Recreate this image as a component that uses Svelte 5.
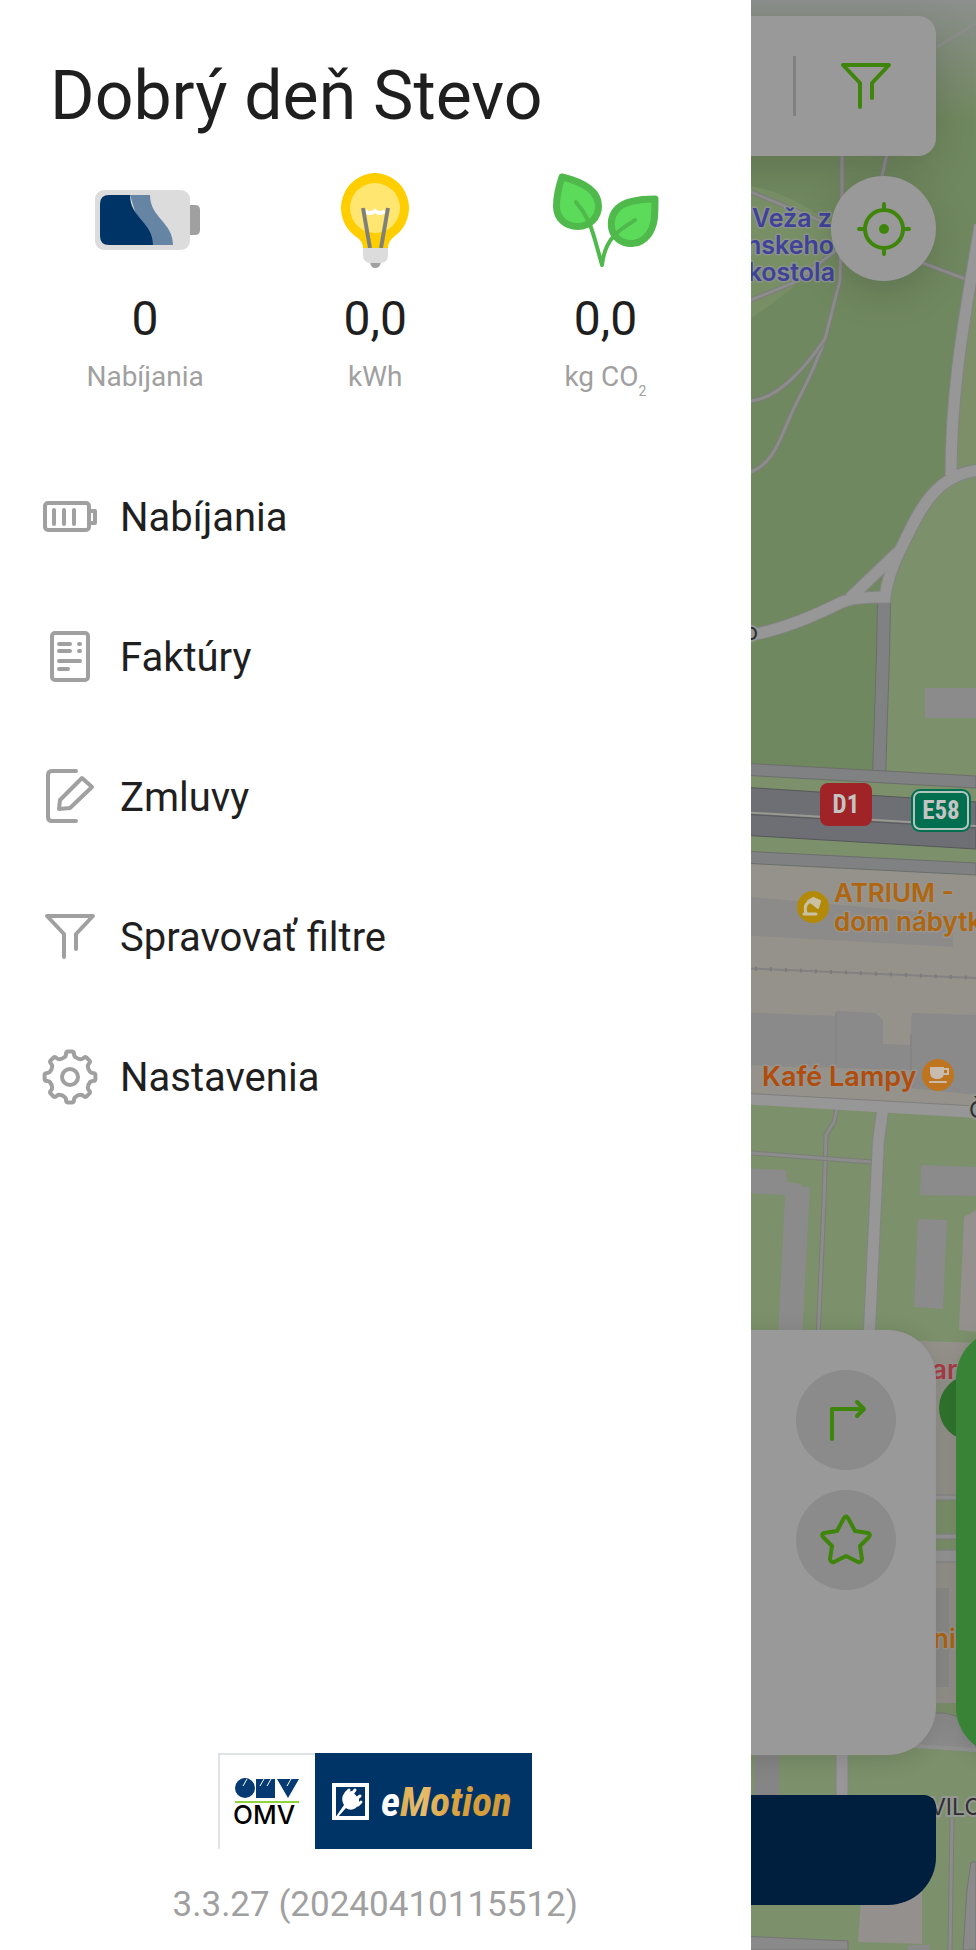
<script>
  const stats = [
    { icon: 'battery', value: '0', label: 'Nabíjania' },
    { icon: 'bulb', value: '0,0', label: 'kWh' },
    { icon: 'leaf', value: '0,0', label: 'kg CO', sub: '2' }
  ];

  const menu = [
    { icon: 'battery', label: 'Nabíjania' },
    { icon: 'invoice', label: 'Faktúry' },
    { icon: 'edit', label: 'Zmluvy' },
    { icon: 'filter', label: 'Spravovať filtre' },
    { icon: 'gear', label: 'Nastavenia' }
  ];

  // Outline of an eight-tooth cog, centred in a 56 unit box.
  function cog() {
    const p = (r, deg) => {
      const a = (deg * Math.PI) / 180;
      return `${(28 + r * Math.cos(a)).toFixed(1)} ${(28 + r * Math.sin(a)).toFixed(1)}`;
    };
    let d = '';
    for (let i = 0; i < 8; i++) {
      const a = i * 45;
      d += `${i ? 'L' : 'M'}${p(23, a - 10)}Q${p(25.5, a - 9)} ${p(25.5, a - 5)}L${p(25.5, a + 5)}Q${p(25.5, a + 9)} ${p(23, a + 10)}`;
      d += `Q${p(20.5, a + 12)} ${p(20.5, a + 17)}Q${p(19.6, a + 22.5)} ${p(20.5, a + 28)}Q${p(20.5, a + 33)} ${p(23, a + 35)}`;
    }
    return d + 'Z';
  }
  const cogPath = cog();

  const paths = [
    'M842 150V200L840 280L826 335C818 362 806 384 796 404C780 436 776 462 751 472',
    'M824 340C808 364 780 398 751 401',
    'M888 150L880 184',
    'M751 192L840 229',
    'M751 300L793 283L850 240',
    'M915 260L976 283',
    'M837 1108L834 1122L826 1135L824 1200L818 1340',
    'M751 1153L872 1162',
    'M952 1818L950 1950'
  ];
  const roads = [
    'M980 225C968 300 951 380 951 475',
    'M980 470C930 475 916 520 900 550C892 568 887 580 885 597C865 597 850 598 840 603C810 618 780 630 751 635',
    'M898 552L850 598',
    'M883 1108C880 1130 878 1140 878 1150L869 1340',
    'M842 1740V1800'
  ];
</script>

<div class="screen">
  <svg class="map" viewBox="0 0 976 1950" preserveAspectRatio="xMaxYMin slice" aria-hidden="true">
    <defs>
      <linearGradient id="haze" x1="0" y1="0" x2="0" y2="1">
        <stop offset="0" stop-color="#8c8f8c" />
        <stop offset="1" stop-color="#8c8f8c" stop-opacity="0" />
      </linearGradient>
    </defs>
    <rect width="976" height="1950" fill="#7c906b" />
    <path d="M740 0H976V470L950 478L905 545L886 600L880 771L740 763Z" fill="#70885f" />
    <path d="M976 260L955 380L951 475L976 470Z" fill="#7c8f69" />
    <path d="M740 184C780 190 815 206 838 236C820 270 785 295 740 326Z" fill="#788f66" />
    <path d="M925 688H976V718H925Z" fill="#8b8b8b" />
    <path d="M884 598L883 655L879 776" fill="none" stroke="#6c6e6c" stroke-width="14" />
    <path d="M884 598L883 655L879 776" fill="none" stroke="#808182" stroke-width="12" />

    <path d="M740 763L976 776V788L740 775Z" fill="#808182" stroke="#6c6e6c" />
    <path d="M740 787L976 802V849L740 835Z" fill="#6d6f74" stroke="#55575a" />
    <path d="M740 812L976 826" stroke="#999992" stroke-width="2" />
    <path d="M740 814L976 828" stroke="#57595c" />
    <path d="M740 863L976 875V1106L740 1094Z" fill="#95928c" />
    <path d="M740 851L976 863V875L740 863Z" fill="#808182" stroke="#6c6e6c" />
    <path d="M740 896L953 915V947L740 935Z" fill="#8c8b89" />
    <path d="M740 968L976 978" stroke="#838281" stroke-width="2" />
    <path d="M740 968L976 978" stroke="#7c7b7a" stroke-width="4" stroke-dasharray="2 13" />
    <path d="M740 1012L835 1016L836 1011L875 1013L883 1020V1044L910 1045L912 1013L976 1015V1095L910 1088V1070L740 1065Z" fill="#8a8a8a" />
    <path d="M836 1013V1064M911 1034V1074" stroke="#7e7e80" />

    <path d="M740 1168L786 1170L787 1182L801 1184L802 1187H810L802 1340H778L785 1195L740 1193Z" fill="#8b8b8b" />
    <path d="M921 1165L976 1167V1196L920 1195Z M918 1219L947 1220L943 1309L914 1307Z" fill="#8b8b8b" />
    <path d="M964 1217L976 1210V1332L959 1330Z" fill="#93908d" />
    <path d="M900 1340L976 1343V1495H900ZM900 1562H976V1703H900Z" fill="#94918b" />
    <path d="M900 1495H976V1500H900ZM900 1534H976V1539H900ZM900 1550H976V1562H900Z" fill="#959596" stroke="#818183" />
    <path d="M936 1588H949V1687H936Z" fill="#8a8a89" />
    <path d="M900 1713H945L976 1722V1750L900 1744Z" fill="#8b8b8c" stroke="#777977" />
    <path d="M900 1745L976 1750" stroke="#919191" stroke-width="4" />
    <path d="M755 1750H779V1800H754Z" fill="#858585" />
    <path d="M861 1900L922 1885V1944L858 1942Z" fill="#93908d" />
    <path d="M740 1936L848 1941V1950H740Z" fill="#8a8a8a" stroke="#757575" />
    <path d="M976 1862H971L967 1890L965 1920L963 1950H976Z" fill="#8a8a8a" stroke="#757575" />
    <path d="M908 1945H930V1950H908Z" fill="#8a8a8a" />

    {#each paths as d}
      <path {d} fill="none" stroke="#7a7d78" stroke-width="5" />
      <path {d} fill="none" stroke="#8c8d8b" stroke-width="3" />
    {/each}
    {#each roads as d}
      <path {d} fill="none" stroke="#828482" stroke-width="13" />
    {/each}
    {#each roads as d}
      <path {d} fill="none" stroke="#979797" stroke-width="11" />
    {/each}
    <path d="M740 1093L976 1106V1118L740 1104Z" fill="#979797" />
    <path d="M740 1093L976 1106" stroke="#7e7f7c" />
    <path d="M937 47L976 23" stroke="#868986" stroke-width="3" />
    <rect width="976" height="120" fill="url(#haze)" />

    <g class="place tower" text-anchor="end">
      <text x="832" y="227">Veža z</text>
      <text x="834" y="254">nskeho</text>
      <text x="835" y="281">kostola</text>
    </g>
    <g class="place shop">
      <text x="834" y="902">ATRIUM -</text>
      <text x="834" y="931">dom nábytk</text>
    </g>
    <text class="place cafe" x="762" y="1086">Kafé Lampy</text>
    <text class="place health" x="932" y="1379">ar</text>
    <text class="place shop" x="933" y="1648">ni</text>
    <g class="street">
      <text x="758" y="640" text-anchor="end">o</text>
      <text x="969" y="1118">Č</text>
      <text x="930" y="1815">VILO</text>
    </g>

    <circle cx="813" cy="907" r="16" fill="#b38a08" />
    <g stroke="#c9c1a6" fill="none" stroke-width="2" stroke-linecap="round">
      <path d="M804 914H816M806 913C804 906 806 903 812 900" stroke-width="3" />
      <path d="M808 901L813 898L820 901L818 908L813 904Z" fill="#c9c1a6" stroke-linejoin="round" />
    </g>
    <circle cx="938" cy="1075" r="16" fill="#bf741e" />
    <path d="M930 1067H944V1072C944 1078 941 1079 937 1079C933 1079 930 1077 930 1072Z" fill="#c8bcae" />
    <path d="M944 1069H948V1074H943M930 1082H946" fill="none" stroke="#c8bcae" stroke-width="2" stroke-linecap="round" />

    <rect x="820" y="783" width="52" height="43" rx="8" fill="#a02427" />
    <rect x="911" y="789" width="60" height="43" rx="9" fill="#006f50" />
    <rect x="914" y="792" width="54" height="37" rx="6" fill="none" stroke="#b5c4bf" stroke-width="2" />
    <g class="shield" text-anchor="middle">
      <text x="846" y="813">D1</text>
      <text x="941" y="819">E58</text>
    </g>
    <circle cx="972" cy="1408" r="33" fill="#30762e" />
  </svg>

  <main class="controls">
    <div class="search">
      <span class="divider"></span>
      <button class="plain" aria-label="Filter">
        <svg width="56" height="56" viewBox="0 0 56 56">
          <path d="M5 7H51L34 25V40M5 7L22 25V49" />
        </svg>
      </button>
    </div>
    <button class="locate" aria-label="Poloha">
      <svg width="56" height="56" viewBox="0 0 56 56">
        <circle cx="28" cy="28" r="19" />
        <path d="M28 3V9M28 47V53M3 28H9M47 28H53" />
        <circle cx="28" cy="28" r="5" class="solid" />
      </svg>
    </button>
    <div class="carousel">
      <section class="card">
        <button class="round" aria-label="Navigovať">
          <svg width="56" height="56" viewBox="0 0 56 56">
            <path d="M14 47V17H46M39 10L46 17L39 24" />
          </svg>
        </button>
        <button class="round" aria-label="Obľúbené">
          <svg width="56" height="56" viewBox="0 0 56 56">
            <path d="M26 6Q28 3 30 6L37 19L50 21Q53 22 51 25L42 34L44 47Q43 51 40 50L28 44L16 50Q13 51 12 47L14 34L5 25Q3 22 6 21L19 19Z" />
          </svg>
        </button>
      </section>
      <section class="card next"></section>
    </div>
    <button class="primary" aria-label="Nabíjať"></button>
  </main>

  <aside class="drawer">
    <h1>Dobrý deň Stevo</h1>

    <div class="stats">
      {#each stats as s}
        <div class="stat">
          <svg width="120" height="100" viewBox="0 0 120 100" aria-hidden="true">
            {#if s.icon === 'battery'}
              <path d="M105 35H110Q115 35 115 40V60Q115 65 110 65H105Z" fill="#a0a0a0" />
              <rect x="10" y="20" width="95" height="60" rx="9" fill="#dcdcdc" />
              <path d="M45 25H65C65 48 88 52 88 75H60Z" fill="#6684a3" />
              <path d="M24 25H45C45 48 68 52 68 75H24Q15 75 15 66V34Q15 25 24 25Z" fill="#003366" />
            {:else if s.icon === 'bulb'}
              <path d="M60 3A35 35 0 0 1 80 66Q73 71 73 78H48Q48 71 40 66A35 35 0 0 1 60 3Z" fill="#ffce00" />
              <circle cx="60" cy="38" r="25" fill="#ffe670" />
              <path d="M50 41Q55 45 60 41Q65 45 70 41" fill="none" stroke="#fff" stroke-width="4" />
              <path d="M48 38L55 78M73 38L66 78" fill="none" stroke="#80807a" stroke-width="4" />
              <path d="M55 92H66Q65 98 60 98Q56 98 55 92Z" fill="#a0a0a0" />
              <path d="M48 78H73V85Q73 93 65 93H56Q48 93 48 85Z" fill="#dcdcdc" />
            {:else}
              <g fill="#5cdb5a" stroke="#4fb94c" stroke-width="7" stroke-linejoin="round">
                <path d="M17 7C38 12 53.500 21 53.500 36C53.500 48 44 56.500 33 56.500C20 56.500 11.500 48 11.500 36C11.500 26 14 16 17 7Z" />
                <path d="M110 29C110 46 110 56 103 65C95 75 82 76 73 69C64 61 64 47 73 38C82 30 97 29 110 29Z" />
              </g>
              <path d="M31 32C42 45 46 56 50 70Q54 84 57 95M90 50C74 60 60 68 57 95" fill="none" stroke="#4fb94c" stroke-width="4" stroke-linecap="round" />
            {/if}
          </svg>
          <strong>{s.value}</strong>
          <span class="unit">{s.label}{#if s.sub}<sub>{s.sub}</sub>{/if}</span>
        </div>
      {/each}
    </div>

    <nav>
      {#each menu as m}
        <a href="#{m.icon}">
          <svg width="56" height="56" viewBox="0 0 56 56" aria-hidden="true">
            {#if m.icon === 'battery'}
              <rect x="3" y="14" width="44" height="27" rx="3" />
              <path d="M48 22H53V34H48M12 21V35M22 21V35M32 21V35" />
            {:else if m.icon === 'invoice'}
              <rect x="10" y="4" width="36" height="47" rx="3" />
              <path d="M17 15H28M17 22H28M37 15H38M37 22H38M17 32H38M17 40H26" />
            {:else if m.icon === 'edit'}
              <path d="M34 2H10Q6 2 6 6V48Q6 52 10 52H34" />
              <path d="M17 40L18 31L40 9L50 18L28 39Z" />
            {:else if m.icon === 'filter'}
              <path d="M5 7H51L34 25V40M5 7L22 25V48" />
            {:else}
              <path d={cogPath} />
              <circle cx="28" cy="28" r="8" />
            {/if}
          </svg>
          <span>{m.label}</span>
        </a>
      {/each}
    </nav>

    <footer>
      <svg class="brand" width="314" height="96" viewBox="0 0 314 96" role="img" aria-label="OMV eMotion">
        <defs>
          <linearGradient id="gold">
            <stop offset="0" stop-color="#d59c3a" />
            <stop offset=".3" stop-color="#e8bd6c" />
            <stop offset=".6" stop-color="#d9a03c" />
            <stop offset="1" stop-color="#cf9a38" />
          </linearGradient>
        </defs>
        <path d="M1 96V1H97" fill="#fff" stroke="#dfe3e6" stroke-width="2" />
        <rect x="97" width="217" height="96" fill="#003366" />
        <g fill="#053a72">
          <circle cx="27" cy="35" r="10" />
          <path d="M38 26H57V45H38ZM59 26H81L70 45Z" />
        </g>
        <path d="M29 26L25 33M46 26L42 33M53 26L49 33M73 26L69 33" stroke="#fff" stroke-width="1" />
        <path d="M17 49H81" stroke="#8ed43a" stroke-width="2" />
        <text class="omv" x="15" y="71">OMV</text>
        <rect x="116" y="32" width="33" height="33" fill="none" stroke="#fff" stroke-width="4" />
        <path d="M117 65L126 52C123 47 124 41 128 39L134 38L141 46L141 51C138 57 132 58 128 55L119 65Z" fill="#fff" />
        <path d="M128 40L131 37M140 52L143 49M133 42L137 37M137 47L142 43" stroke="#fff" stroke-width="3" stroke-linecap="round" />
        <text class="emotion" x="163" y="63" fill="#fff">e<tspan fill="url(#gold)">Motion</tspan></text>
      </svg>
      <p>3.3.27 (20240410115512)</p>
    </footer>
  </aside>
</div>

<style>
  :global(body) {
    margin: 0;
  }

  .screen {
    position: relative;
    display: grid;
    grid-template-columns: minmax(0, 1fr);
    min-height: 100vh;
    overflow: hidden;
    font-family: Roboto, 'Noto Sans', sans-serif;
    color: #1f1f1f;
  }

  .map {
    position: absolute;
    inset: 0;
    width: 100%;
    height: 100%;
  }

  .controls,
  .drawer {
    grid-area: 1 / 1;
    position: relative;
    display: flex;
    flex-direction: column;
    box-sizing: border-box;
  }

  .place {
    font: 600 26px Inter, sans-serif;
    paint-order: stroke;
    stroke-width: 3px;
    stroke-linejoin: round;
  }
  .tower {
    font-size: 25px;
    fill: #40429a;
    stroke: #8b9389;
  }
  .shop {
    fill: #b0650f;
    stroke: #98958e;
  }
  .cafe {
    font-size: 27px;
    fill: #b04c0c;
    stroke: #98958e;
  }
  .health {
    fill: #a83c47;
    stroke: #98958e;
  }
  .street {
    font: 400 23px Inter, sans-serif;
    fill: #2f3030;
    paint-order: stroke;
    stroke: #949693;
    stroke-width: 4px;
  }
  .shield {
    font: 700 25px 'Liberation Sans Narrow', 'Roboto Condensed', 'Liberation Sans', sans-serif;
    fill: #c4c4c4;
  }

  button {
    border: 0;
    padding: 0;
    background: none;
    cursor: pointer;
    display: grid;
    place-items: center;
  }
  .controls {
    padding: 16px 40px 45px;
  }
  .controls svg {
    fill: none;
    stroke: #3f850c;
    stroke-width: 4;
    stroke-linecap: round;
    stroke-linejoin: round;
  }
  .controls .solid {
    fill: #3f850c;
    stroke: none;
  }
  .search {
    display: flex;
    align-items: center;
    justify-content: flex-end;
    gap: 42px;
    height: 140px;
    padding-right: 42px;
    box-sizing: border-box;
    border-radius: 18px;
    background: #999;
    box-shadow: 0 12px 40px rgba(0, 0, 0, 0.15);
  }
  .divider {
    width: 3px;
    height: 60px;
    background: #808080;
  }
  .locate {
    align-self: flex-end;
    width: 105px;
    height: 105px;
    margin-top: 20px;
    border-radius: 50%;
    background: #999;
    box-shadow: 0 12px 40px rgba(0, 0, 0, 0.15);
  }
  .carousel {
    display: flex;
    gap: 20px;
    margin-top: auto;
  }
  .card {
    flex: 0 0 100%;
    box-sizing: border-box;
    display: flex;
    flex-direction: column;
    align-items: flex-end;
    gap: 20px;
    min-height: 425px;
    padding: 40px;
    border-radius: 48px;
    background: #999;
    box-shadow: 0 4px 24px rgba(0, 0, 0, 0.12);
  }
  .next {
    background: #388335;
  }
  .round {
    width: 100px;
    height: 100px;
    border-radius: 50%;
    background: #8b8b8b;
  }
  .primary {
    height: 110px;
    margin-top: 40px;
    border-radius: 12px 12px 48px 48px;
    background: #001e3d;
  }

  .drawer {
    width: calc(77% - 1px);
    padding: 56px 30px 25px;
    background: #fff;
  }
  h1 {
    margin: 0 0 34px 20px;
    font-size: 68px;
    line-height: 80px;
    font-weight: 400;
  }
  .stats {
    display: grid;
    grid-template-columns: repeat(3, 1fr);
  }
  .stat {
    display: flex;
    flex-direction: column;
    align-items: center;
  }
  .stat strong {
    margin: 21px 0 14px;
    font-size: 48px;
    line-height: 56px;
    font-weight: 400;
  }
  .unit {
    font-size: 28px;
    line-height: 32px;
    color: #a0a0a0;
  }
  sub {
    font-size: 14px;
    line-height: 0;
    vertical-align: -10px;
  }
  nav {
    margin-top: 54px;
  }
  nav a {
    display: flex;
    align-items: center;
    gap: 22px;
    height: 140px;
    padding-left: 12px;
    font-size: 40px;
    color: inherit;
    text-decoration: none;
  }
  nav svg {
    fill: none;
    stroke: #a0a0a0;
    stroke-width: 4;
    stroke-linecap: round;
    stroke-linejoin: round;
  }
  footer {
    display: flex;
    flex-direction: column;
    align-items: center;
    gap: 35px;
    margin-top: auto;
  }
  footer p {
    margin: 0;
    font-size: 35px;
    line-height: 41px;
    color: #a0a0a0;
  }
  .omv {
    font: 500 26px Inter, sans-serif;
  }
  .emotion {
    font: italic 700 41px 'Liberation Sans Narrow', 'Roboto Condensed', 'Liberation Sans', sans-serif;
  }
</style>
